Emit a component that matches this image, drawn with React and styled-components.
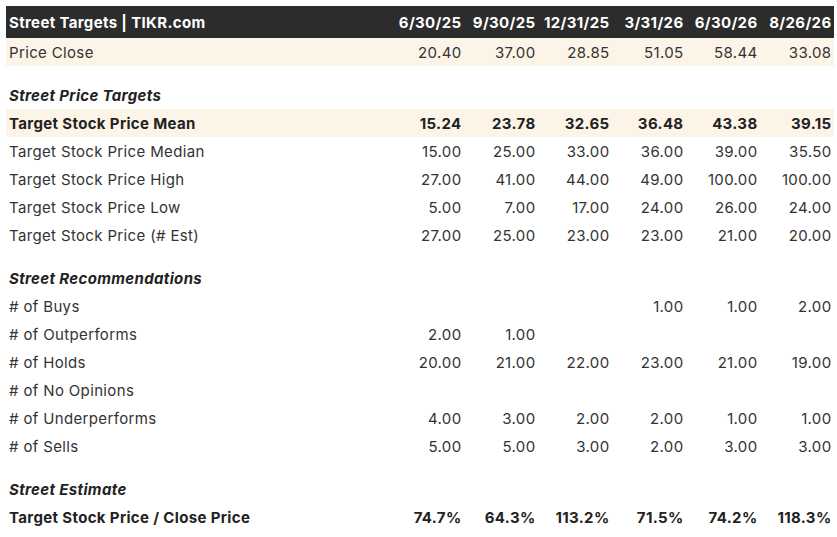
import React from "react";
import styled, { createGlobalStyle } from "styled-components";

const Global = createGlobalStyle`
  html, body { margin: 0; padding: 0; background: #ffffff; }
  body { font-family: Inter, "Noto Sans", "Liberation Sans", sans-serif; }
`;

const Wrap = styled.div`
  padding: 6px 3px 6px 6px;
  width: 828px;
`;

const Grid = styled.div`
  display: grid;
  grid-template-columns: 1fr repeat(6, 74px);
  align-items: center;
  height: ${(p) => p.$h || 28}px;
  background: ${(p) => (p.$hl ? "#fdf4e8" : "transparent")};
  color: ${(p) => (p.$bold ? "#222222" : "#333333")};
  font-size: 15px;
  letter-spacing: 0.35px;
  font-weight: ${(p) => (p.$bold ? 700 : 400)};
`;

const HeaderRow = styled(Grid)`
  background: #2c2c2c;
  color: #ffffff;
  font-weight: 700;
  height: 32px;
`;

const Label = styled.div`
  padding-left: 3px;
  white-space: nowrap;
`;

const Section = styled(Label)`
  font-weight: 700;
  font-style: italic;
  color: #222222;
`;

const Cell = styled.div`
  text-align: right;
  padding-right: 2.5px;
  white-space: nowrap;
`;

const Spacer = styled.div`
  height: 15px;
`;

const cols = ["6/30/25", "9/30/25", "12/31/25", "3/31/26", "6/30/26", "8/26/26"];

const Row = ({ label, values, hl, bold }) => (
  <Grid $hl={hl} $bold={bold}>
    <Label>{label}</Label>
    {values.map((v, i) => (
      <Cell key={i}>{v}</Cell>
    ))}
  </Grid>
);

const SectionRow = ({ title }) => (
  <Grid>
    <Section>{title}</Section>
  </Grid>
);

export default function App() {
  return (
    <>
      <Global />
      <Wrap>
        <HeaderRow>
          <Label>Street Targets | TIKR.com</Label>
          {cols.map((c) => (
            <Cell key={c}>{c}</Cell>
          ))}
        </HeaderRow>
        <Row hl label="Price Close" values={["20.40", "37.00", "28.85", "51.05", "58.44", "33.08"]} />
        <Spacer />
        <SectionRow title="Street Price Targets" />
        <Row hl bold label="Target Stock Price Mean" values={["15.24", "23.78", "32.65", "36.48", "43.38", "39.15"]} />
        <Row label="Target Stock Price Median" values={["15.00", "25.00", "33.00", "36.00", "39.00", "35.50"]} />
        <Row label="Target Stock Price High" values={["27.00", "41.00", "44.00", "49.00", "100.00", "100.00"]} />
        <Row label="Target Stock Price Low" values={["5.00", "7.00", "17.00", "24.00", "26.00", "24.00"]} />
        <Row label="Target Stock Price (# Est)" values={["27.00", "25.00", "23.00", "23.00", "21.00", "20.00"]} />
        <Spacer />
        <SectionRow title="Street Recommendations" />
        <Row label="# of Buys" values={["", "", "", "1.00", "1.00", "2.00"]} />
        <Row label="# of Outperforms" values={["2.00", "1.00", "", "", "", ""]} />
        <Row label="# of Holds" values={["20.00", "21.00", "22.00", "23.00", "21.00", "19.00"]} />
        <Row label="# of No Opinions" values={["", "", "", "", "", ""]} />
        <Row label="# of Underperforms" values={["4.00", "3.00", "2.00", "2.00", "1.00", "1.00"]} />
        <Row label="# of Sells" values={["5.00", "5.00", "3.00", "2.00", "3.00", "3.00"]} />
        <Spacer />
        <SectionRow title="Street Estimate" />
        <Row bold label="Target Stock Price / Close Price" values={["74.7%", "64.3%", "113.2%", "71.5%", "74.2%", "118.3%"]} />
      </Wrap>
    </>
  );
}
